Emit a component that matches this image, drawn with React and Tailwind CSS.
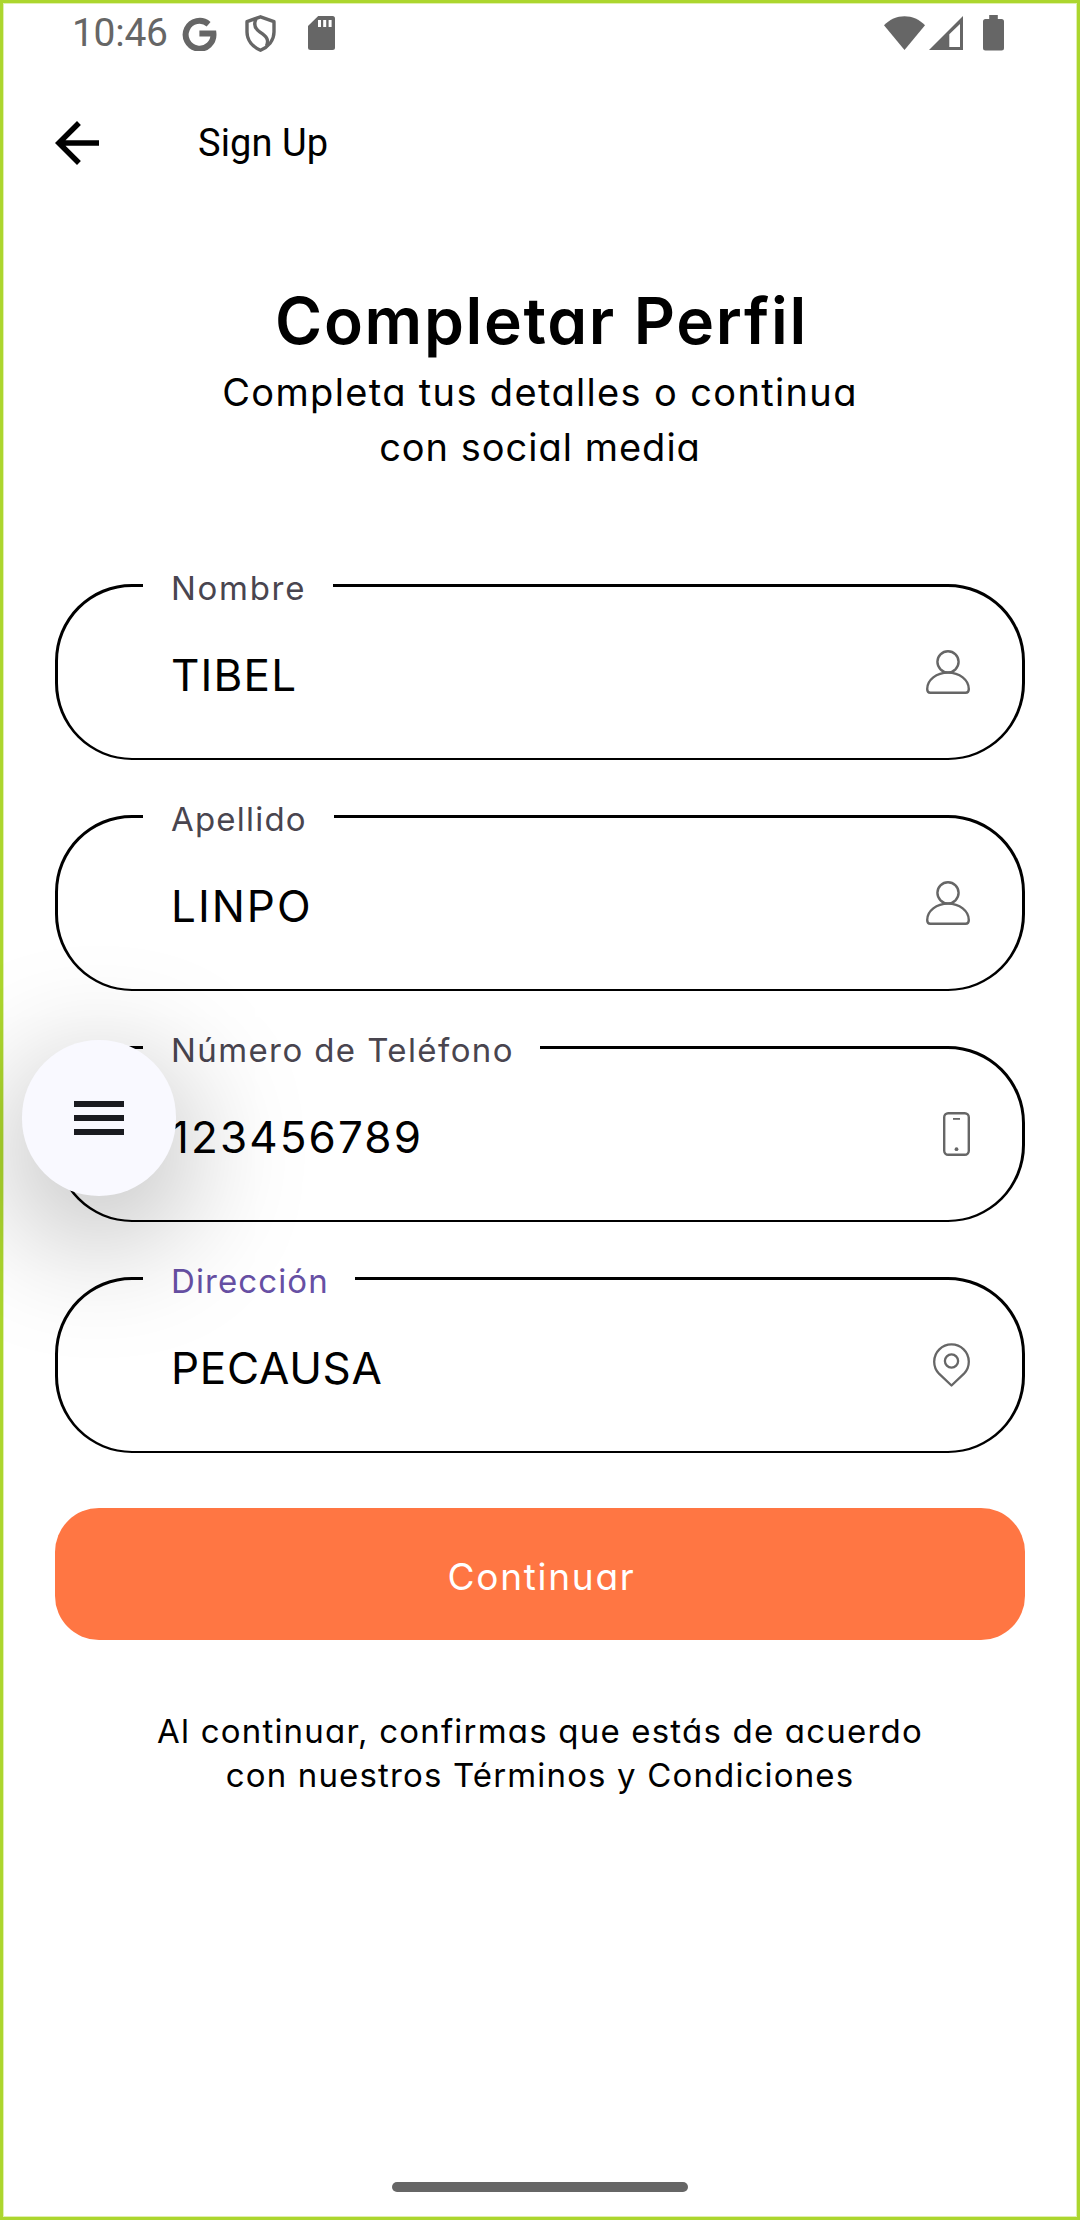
function GoogleIcon() {
  return (
    <svg className="h-[35px] w-[35px] shrink-0" viewBox="0 0 35 35" fill="none" stroke="#666" strokeWidth="6">
      <path d="M26.6 8.2A13.9 13.9 0 1 0 31.4 17.4H17.4" />
    </svg>
  );
}

function ShieldIcon() {
  return (
    <svg className="h-[37px] w-[31px] shrink-0" viewBox="0 0 31 37" fill="none" stroke="#666" strokeWidth="3.4" strokeLinejoin="round">
      <path d="M15.5 1.8 29 6.7V17C29 25.5 23 32 15.5 35.2 8 32 2 25.5 2 17V6.7Z" />
      <path d="M11 4C8 10 10.5 14 15 17.2C21 21.3 24.5 24 21.5 31" />
    </svg>
  );
}

function SdCardIcon() {
  return (
    <svg className="h-[34px] w-[27px] shrink-0" viewBox="0 0 27 34">
      <path fill="#666" d="M10.2 0H24.5A2.5 2.5 0 0 1 27 2.5V31.5A2.5 2.5 0 0 1 24.5 34H2.5A2.5 2.5 0 0 1 0 31.5V10Z" />
      <path fill="#fff" d="M10 4h3v7h-3zM15.2 4h3v7h-3zM20.6 4h3v7h-3z" />
    </svg>
  );
}

function StatusBar() {
  return (
    <div className="flex h-[66px] items-center pr-[76px] pl-[72px]">
      <span className="w-[110px] text-[39px] leading-[66px] tracking-[-0.3px] text-[#666]">10:46</span>
      <GoogleIcon />
      <span className="ml-7 flex">
        <ShieldIcon />
      </span>
      <span className="ml-8 flex">
        <SdCardIcon />
      </span>
      <span className="flex-1" />
      <svg className="h-[34px] w-[41px] shrink-0" viewBox="0 0 41 34">
        <path fill="#666" d="M20.5 34 0 9.3C11 -2.9 30 -2.9 41 9.3Z" />
      </svg>
      <svg className="ml-1 h-[34px] w-[34px] shrink-0" viewBox="0 0 34 34">
        <path fill="#666" fillRule="evenodd" d="M34 0V34H0ZM31 8 20.3 18.2V31H31Z" />
      </svg>
      <svg className="ml-5 h-[36px] w-[21px] shrink-0" viewBox="0 0 21 36">
        <path fill="#666" d="M6.2 0H14.8V4H18.5A2.5 2.5 0 0 1 21 6.5V33A2.5 2.5 0 0 1 18.5 35.5H2.5A2.5 2.5 0 0 1 0 33V6.5A2.5 2.5 0 0 1 2.5 4H6.2Z" />
      </svg>
    </div>
  );
}

function UserIcon() {
  return (
    <svg className="h-11 w-11" viewBox="0 0 44 44" fill="none" stroke="#666" strokeWidth="2.4">
      <circle cx="22" cy="11.8" r="10.6" />
      <path d="M4.4 42.8H39.6Q42.8 42.8 42.8 39C42.8 30 33.5 22.6 22 22.6S1.2 30 1.2 39Q1.2 42.8 4.4 42.8Z" />
    </svg>
  );
}

function PhoneIcon() {
  return (
    <svg className="h-11 w-[27px]" viewBox="0 0 27 44" fill="none" stroke="#666" strokeWidth="2.4">
      <rect x="1.2" y="1.2" width="24.6" height="41.6" rx="4" />
      <path d="M10 6.9H17" strokeWidth="1.8" />
      <circle cx="13.5" cy="37.2" r="1.9" fill="#666" stroke="none" />
    </svg>
  );
}

function PinIcon() {
  return (
    <svg className="h-11 w-[37px]" viewBox="0 0 37 44" fill="none" stroke="#666" strokeWidth="2.3" strokeLinejoin="round">
      <path d="M18.5 42.5 6 30.7A17.3 17.3 0 1 1 31 30.7Z" />
      <circle cx="18.5" cy="18" r="6.6" />
    </svg>
  );
}

const fields = [
  { label: "Nombre", value: "TIBEL", Icon: UserIcon, box: "w-[190px]", labelStyle: "tracking-[1.7px] text-[#49454f]", valueStyle: "tracking-[1.2px]" },
  { label: "Apellido", value: "LINPO", Icon: UserIcon, box: "w-[191px]", labelStyle: "tracking-[1.2px] text-[#49454f]", valueStyle: "tracking-[2px]" },
  { label: "Número de Teléfono", value: "123456789", Icon: PhoneIcon, box: "w-[397px]", labelStyle: "tracking-[1.4px] text-[#49454f]", valueStyle: "tracking-[2.1px]" },
  { label: "Dirección", value: "PECAUSA", Icon: PinIcon, box: "w-[212px]", labelStyle: "tracking-[1.1px] text-[#6750a4]", valueStyle: "tracking-[0.7px]" },
];

function Field({ label, value, Icon, box, labelStyle, valueStyle }) {
  return (
    <div className="flex h-[176px] flex-col rounded-[77px] border-x-[3px] border-t-[3px] border-b-2 border-black">
      <div className={`-mt-[19px] ml-[85px] h-10 shrink-0 bg-white pl-[28px] ${box}`}>
        <span className={`text-[33px] leading-10 whitespace-nowrap ${labelStyle}`}>{label}</span>
      </div>
      <div className="flex h-[134px] items-center justify-between pr-[52px] pl-[113px]">
        <span className={`text-[44px] leading-[60px] text-black ${valueStyle}`}>{value}</span>
        <span className="mb-[7px] flex">
          <Icon />
        </span>
      </div>
    </div>
  );
}

export default function App() {
  return (
    <div className="relative flex h-[2220px] w-[1080px] flex-col overflow-hidden bg-white font-['Roboto',sans-serif] shadow-[inset_0_0_0_3px_#acd62e,inset_0_0_0_4px_#e0f0b0]">
      <StatusBar />
      <header className="flex h-[154px] items-center pl-11">
        <svg className="h-[66px] w-[66px]" viewBox="0 0 24 24">
          <path d="M20 11H7.83l5.59-5.59L12 4l-8 8 8 8 1.41-1.41L7.83 13H20v-2z" />
        </svg>
        <h1 className="ml-[88px] text-[38px] leading-[60px] tracking-[0.1px] text-black">Sign Up</h1>
      </header>

      <main className="flex flex-col px-[55px] pt-[68px] font-['Inter',sans-serif] font-[370] text-black [font-feature-settings:'cv11']">
        <div className="flex flex-col items-center whitespace-nowrap">
          <h2 className="h-16 pl-[3px] text-[64px] leading-[65px] font-semibold tracking-[1.7px]">Completar Perfil</h2>
          <p className="mt-[13px] text-[38px] leading-[55px] tracking-[1.35px]">Completa tus detalles o continua</p>
          <p className="text-[38px] leading-[55px] tracking-[1px]">con social media</p>
        </div>

        <form className="mt-[109px] flex flex-col gap-[55px]">
          {fields.map((field) => (
            <Field key={field.label} {...field} />
          ))}
          <button type="button" className="h-[132px] rounded-[44px] bg-[#ff7643] text-[37px] tracking-[1.7px] text-white [font-feature-settings:'cv11']">
            <span className="relative top-[3px] pl-[3px]">Continuar</span>
          </button>
        </form>

        <div className="mt-[69px] flex flex-col items-center text-[33px] leading-[44px] whitespace-nowrap">
          <p className="tracking-[1.2px]">Al continuar, confirmas que estás de acuerdo</p>
          <p className="tracking-[1.15px]">con nuestros Términos y Condiciones</p>
        </div>
      </main>

      <div className="mt-auto mb-7 h-[10px] w-[296px] self-center rounded-full bg-[#666]" />

      <button
        type="button"
        aria-label="Menu"
        className="absolute top-[1040px] left-[22px] flex h-[156px] w-[154px] flex-col items-center justify-center gap-2 rounded-full bg-[#f9f9ff] shadow-[0_34px_125px_10px_rgba(0,0,0,0.27)]"
      >
        <span className="h-[6px] w-[50px] bg-[#1a1b20]" />
        <span className="h-[6px] w-[50px] bg-[#1a1b20]" />
        <span className="h-[6px] w-[50px] bg-[#1a1b20]" />
      </button>
    </div>
  );
}
